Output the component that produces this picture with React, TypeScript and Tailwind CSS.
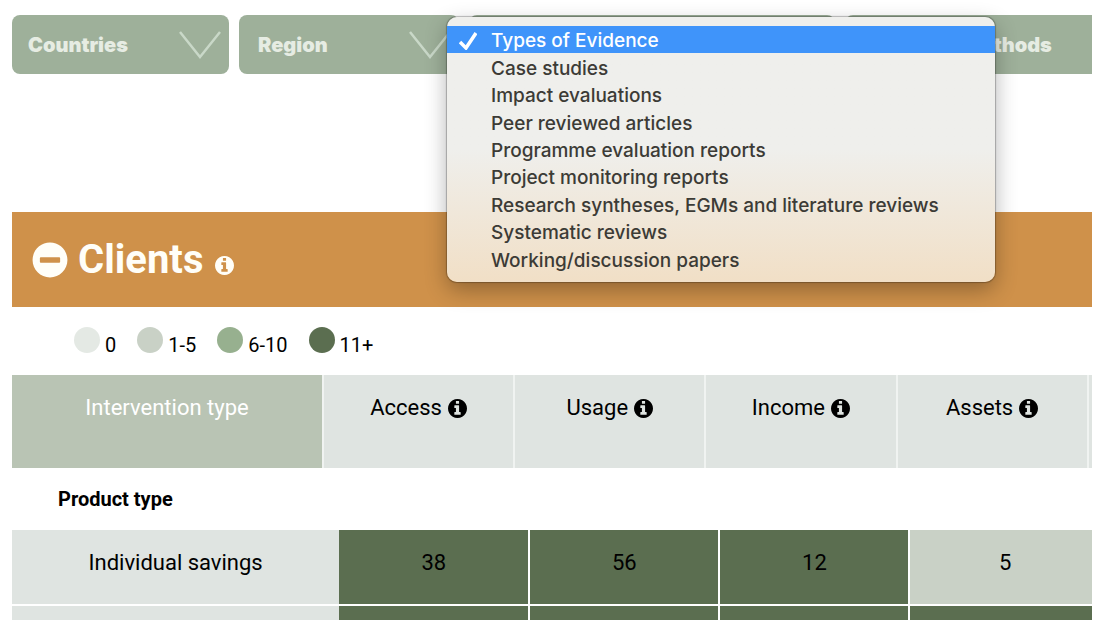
import { useState } from "react";
import { FaMinusCircle } from "react-icons/fa";

const evidenceTypes = [
  "Types of Evidence",
  "Case studies",
  "Impact evaluations",
  "Peer reviewed articles",
  "Programme evaluation reports",
  "Project monitoring reports",
  "Research syntheses, EGMs and literature reviews",
  "Systematic reviews",
  "Working/discussion papers",
];

const legend = [
  { label: "0", color: "bg-[#e4e9e4]" },
  { label: "1-5", color: "bg-[#c9d1c6]" },
  { label: "6-10", color: "bg-[#97b08f]" },
  { label: "11+", color: "bg-[#5b6e50]" },
];

const outcomes = ["Access", "Usage", "Income", "Assets"];

const rows = [
  { name: "Individual savings", counts: [38, 56, 12, 5] },
];

function cellColor(n: number) {
  if (n > 10) return "bg-[#5b6e50]";
  if (n > 5) return "bg-[#97b08f]";
  if (n > 0) return "bg-[#c9d1c6]";
  return "bg-[#e4e9e4]";
}

export default function App() {
  return (
    <main className="ml-3 mr-[18px] overflow-x-clip bg-white font-['Roboto',sans-serif] text-black">
      <div className="flex gap-2.5 pt-[15px]">
        <Filter label="Countries" className="w-[217px]" pad="pl-4" />
        <Filter label="Region" className="w-[220px]" pad="pl-[19px]" />
        <div className="relative w-[366px] shrink-0">
          <Filter label="Types of Evidence" className="w-full" pad="pl-[19px]" />
          <EvidenceMenu />
        </div>
        <Filter label="Research Methods" className="w-[300px]" pad="pl-[19px]" />
      </div>

      <section className="mt-[138px]">
        <header className="flex h-[95px] items-center bg-[#cf914a] pl-5 text-[#fffef8]">
          <button aria-label="Collapse clients">
            <FaMinusCircle className="size-9" />
          </button>
          <h1 className="ml-2.5 text-[40px] leading-none font-bold">Clients</h1>
          <button aria-label="About clients" className="mt-3 ml-3">
            <InfoIcon />
          </button>
        </header>

        <ul className="flex h-[68px] items-center gap-[21px] pb-0.5 pl-[62px] text-xl">
          {legend.map((l) => (
            <li key={l.label} className="flex items-center gap-[5px]">
              <span className={`size-[26px] rounded-full ${l.color}`} />
              <span className="pt-2.5">{l.label}</span>
            </li>
          ))}
        </ul>

        <table className="w-full table-fixed text-[22px] leading-7">
          <thead>
            <tr className="h-[93px] bg-[#dfe4e1] align-top">
              <th className="w-[28.8%] bg-[#b9c4b4] pt-[19px] font-normal text-white">
                Intervention type
              </th>
              {outcomes.map((o) => (
                <th key={o} className="w-[17.7%] border-l-2 border-[#f0f3f1] pt-[19px] font-normal">
                  <span className="flex items-center justify-center gap-1.5">
                    {o}
                    <button aria-label={`About ${o}`}>
                      <InfoIcon />
                    </button>
                  </span>
                </th>
              ))}
              <td className="border-l-2 border-[#f0f3f1]" />
            </tr>
          </thead>
        </table>

        <h2 className="flex h-[62px] items-center pl-[46px] text-xl font-bold">Product type</h2>

        <table className="w-full table-fixed text-center text-[22px] leading-7">
          <tbody>
            {rows.map((r) => (
              <tr key={r.name} className="h-[75px] align-top">
                <th className="w-[30.3%] bg-[#dfe4e1] pt-[19px] font-normal">{r.name}</th>
                {r.counts.map((n, i) => (
                  <td
                    key={i}
                    className={`border-white pt-[19px] last:pl-2 not-last:w-[17.6%] ${i > 0 ? "border-l-2" : ""} ${cellColor(n)}`}
                  >
                    {n}
                  </td>
                ))}
              </tr>
            ))}
            {/* next row, cut off by the fold */}
            <tr className="h-[15px] border-t-2 border-white">
              <th className="bg-[#dfe4e1]" />
              {outcomes.map((o, i) => (
                <td key={o} className={`border-white bg-[#5b6e50] ${i > 0 ? "border-l-2" : ""}`} />
              ))}
            </tr>
          </tbody>
        </table>
      </section>
    </main>
  );
}

function InfoIcon() {
  return (
    <svg viewBox="128 128 1536 1536" className="size-[19px] fill-current">
      <path d="M1152 1376v-160q0-14-9-23t-23-9h-96v-512q0-14-9-23t-23-9h-320q-14 0-23 9t-9 23v160q0 14 9 23t23 9h96v320h-96q-14 0-23 9t-9 23v160q0 14 9 23t23 9h448q14 0 23-9t9-23zm-128-896v-160q0-14-9-23t-23-9h-192q-14 0-23 9t-9 23v160q0 14 9 23t23 9h192q14 0 23-9t9-23zm640 416q0 209-103 385.5t-279.5 279.5-385.5 103-385.5-103-279.5-279.5-103-385.5 103-385.5 279.5-279.5 385.5-103 385.5 103 279.5 279.5 103 385.5z" />
    </svg>
  );
}

interface FilterProps {
  label: string;
  className: string;
  pad: string;
}

function Filter({ label, className, pad }: FilterProps) {
  return (
    <div className={`relative shrink-0 ${className}`}>
      <select
        aria-label={label}
        className={`h-[59px] w-full appearance-none rounded-lg bg-[#9eb09a] font-['Inter',sans-serif] text-xl font-black text-[#e6ece3] ${pad}`}
      >
        <option>{label}</option>
      </select>
      <svg
        viewBox="0 0 42 28"
        className="pointer-events-none absolute top-4 right-2 h-7 w-[42px] fill-none stroke-[#c9d8c8] stroke-[2.5]"
      >
        <path d="M1 1 L21 26 L41 1" />
      </svg>
    </div>
  );
}

function EvidenceMenu() {
  const [selected, setSelected] = useState(0);

  return (
    <ul
      role="listbox"
      aria-label="Types of Evidence"
      className="absolute top-0.5 -left-[22px] z-10 grid h-[265px] w-[548px] auto-rows-fr rounded-[10px] bg-linear-to-b from-[#efefec] from-50% to-[#f1dfc6] py-[9px] font-['Inter',sans-serif] text-[19px] font-medium text-[#3c3b36] shadow-[0_0_1px_1px_rgba(0,0,0,0.25),0_8px_22px_rgba(0,0,0,0.3)]"
    >
      {evidenceTypes.map((t, i) => (
        <li
          key={t}
          role="option"
          aria-selected={i === selected}
          onClick={() => setSelected(i)}
          className={`flex items-center pt-[3px] pl-3 leading-6 whitespace-nowrap ${
            i === selected ? "bg-[#3f94fa] text-white" : ""
          }`}
        >
          <span className="w-8">
            {i === selected && (
              <svg viewBox="0 0 18 18" className="size-[18px] fill-none stroke-white stroke-[3.5]">
                <path d="M1 10 L7 16 L17 1" />
              </svg>
            )}
          </span>
          {t}
        </li>
      ))}
    </ul>
  );
}
